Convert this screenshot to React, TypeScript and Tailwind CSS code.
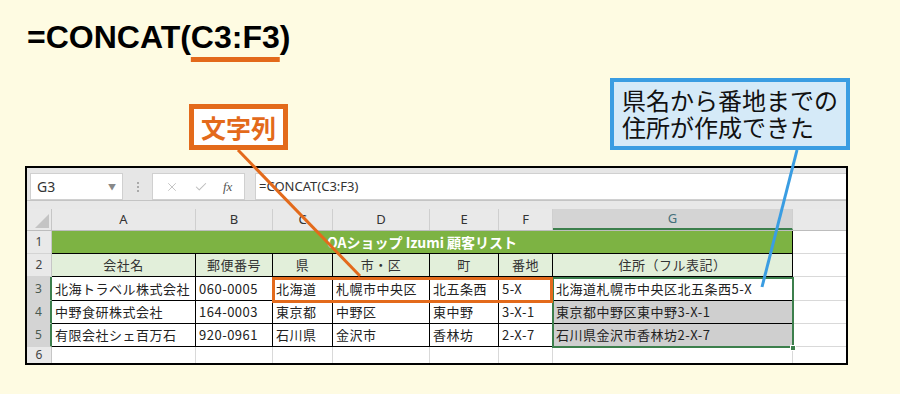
import { X, Check } from 'lucide-react';

type Col = { key: string; w: string };

// 列幅は参照画像から計測
const cols: Col[] = [
  { key: 'A', w: 'w-[144px]' },
  { key: 'B', w: 'w-[77px]' },
  { key: 'C', w: 'w-[60px]' },
  { key: 'D', w: 'w-[97px]' },
  { key: 'E', w: 'w-[69px]' },
  { key: 'F', w: 'w-[54px]' },
  { key: 'G', w: 'w-[240px]' },
];

const headers = ['会社名', '郵便番号', '県', '市・区', '町', '番地', '住所（フル表記）'];

const rows = [
  ['北海トラベル株式会社', '060-0005', '北海道', '札幌市中央区', '北五条西', '5-X', '北海道札幌市中央区北五条西5-X'],
  ['中野食研株式会社', '164-0003', '東京都', '中野区', '東中野', '3-X-1', '東京都中野区東中野3-X-1'],
  ['有限会社シェ百万石', '920-0961', '石川県', '金沢市', '香林坊', '2-X-7', '石川県金沢市香林坊2-X-7'],
];

const jp = "font-['Noto_Sans_CJK_JP',sans-serif]";

function RowHead({ n, selected, h }: { n: number; selected?: boolean; h: string }) {
  return (
    <div
      className={`${h} w-[25px] shrink-0 flex items-center justify-center text-[12px] font-['Noto_Sans',sans-serif] border-b border-[#d4d4d4] ${
        selected
          ? 'bg-[#d4d4d4] text-[#4a5a50] border-r-2 border-r-[#3c7f4c]'
          : 'bg-[#e9e9e9] text-[#444] border-r border-r-[#c6c6c6]'
      }`}
    >
      {n}
    </div>
  );
}

function FormulaBar() {
  return (
    <div className="h-[32px] bg-[#e6e6e6] flex items-start pt-[5px] pl-[3px]">
      <div className="w-[93px] h-[27px] bg-white border border-[#d0d0d0] flex items-center justify-between pl-[6px] pr-[6px]">
        <span className="text-[14px] text-[#333] font-['Noto_Sans',sans-serif]">G3</span>
        <span className="text-[8px] text-[#888]">▼</span>
      </div>
      <div className="w-[29px] h-[27px] flex flex-col items-center justify-center gap-[2px]">
        <span className="w-[2px] h-[2px] bg-[#aaa]" />
        <span className="w-[2px] h-[2px] bg-[#aaa]" />
        <span className="w-[2px] h-[2px] bg-[#aaa]" />
      </div>
      <div className="w-[93px] h-[27px] bg-white border border-[#d0d0d0] flex items-center justify-around px-[4px]">
        <X size={14} strokeWidth={1.5} color="#bdbdbd" />
        <Check size={14} strokeWidth={1.8} color="#bdbdbd" />
        <span className="text-[13px] italic text-[#555] font-['Liberation_Serif',serif]">fx</span>
      </div>
      <div className="flex-1 ml-[10px] h-[27px] bg-white border-y border-l border-[#d0d0d0] flex items-center pl-[3px]">
        <span className="text-[13px] text-[#333] font-['Noto_Sans',sans-serif]">=CONCAT(C3:F3)</span>
      </div>
    </div>
  );
}

function ColumnHeads() {
  return (
    <>
      <div className="h-[10px] bg-[#e8e8e8] border-t border-[#c4c4c4]" />
      <div className="h-[22px] flex bg-[#e9e9e9] border-b border-[#bdbdbd]">
        <div className="w-[25px] shrink-0 border-r border-[#c6c6c6] flex items-end justify-end pr-[2px] pb-[2px]">
          <svg width="14" height="14" viewBox="0 0 14 14">
            <polygon points="14,0 14,14 0,14" fill="#c4c4c4" />
          </svg>
        </div>
        {cols.map((c) => (
          <div
            key={c.key}
            className={`${c.w} shrink-0 flex items-center justify-center text-[13px] font-['Noto_Sans',sans-serif] border-r border-[#cfcfcf] ${
              c.key === 'G' ? 'bg-[#d4d4d4] text-[#44707a] border-b-2 border-b-[#3c7f4c]' : 'text-[#333]'
            }`}
          >
            {c.key}
          </div>
        ))}
        <div className="flex-1" />
      </div>
    </>
  );
}

export default function App() {
  return (
    <div className={`w-[900px] h-[394px] bg-[#fefbe2] relative overflow-hidden ${jp}`}>
      {/* タイトル */}
      <div className="h-[78px] pt-[21px] pl-[27px]">
        <div className="font-['Liberation_Sans',sans-serif] font-bold text-[32px] leading-[32px] text-black">
          =CONCAT(
          <span className="underline decoration-[#e3691b] decoration-[5px] underline-offset-[9px]">C3:F3</span>)
        </div>
      </div>

      {/* 吹き出し */}
      <div className="h-[72px] flex items-end">
        <div className="ml-[189px] w-[99px] h-[46px] border-[5px] border-[#e36a1b] bg-white flex items-center justify-center">
          <span className="text-[25px] leading-none font-bold text-[#e36a1b]">文字列</span>
        </div>
        <div className="ml-auto mr-[50px] w-[240px] h-[72px] border-[4px] border-[#3a9de2] bg-[#d5eaf8] pl-[8px] pt-[4px] text-[24px] leading-[27px] text-[#111]">
          県名から番地までの
          <br />
          住所が作成できた
        </div>
      </div>

      {/* シート */}
      <div className="mt-[16px] ml-[25px] w-[823px] h-[199px] border-2 border-black bg-white relative flex flex-col">
        <FormulaBar />
        <ColumnHeads />

        {/* 1行目 */}
        <div className="h-[23px] flex">
          <RowHead n={1} h="h-[23px]" />
          <div className="w-[741px] shrink-0 bg-[#7db343] border-b border-r border-black flex items-center justify-center">
            <span className="text-[14px] font-bold text-white">OAショップ Izumi 顧客リスト</span>
          </div>
          <div className="flex-1 border-b border-[#d9d9d9]" />
        </div>

        {/* 2行目 見出し */}
        <div className="h-[23px] flex">
          <RowHead n={2} h="h-[23px]" />
          {cols.map((c, i) => (
            <div
              key={c.key}
              className={`${c.w} shrink-0 bg-[#e2efda] border-b border-r border-black flex items-center justify-center text-[13px] text-[#333] tracking-[0.5px]`}
            >
              {headers[i]}
            </div>
          ))}
          <div className="flex-1 border-b border-[#d9d9d9]" />
        </div>

        {/* データ */}
        {rows.map((r, ri) => {
          const h = ri === 0 ? 'h-[24px]' : 'h-[23px]';
          return (
            <div key={ri} className={`${h} flex`}>
              <RowHead n={ri + 3} selected h={h} />
              {cols.map((c, ci) => {
                const isG = c.key === 'G';
                const bg = isG && ri > 0 ? 'bg-[#cfcfcf]' : 'bg-white';
                return (
                  <div
                    key={c.key}
                    className={`${c.w} shrink-0 ${bg} border-b border-r border-black flex items-center pl-[3px] text-[13px] text-[#222] tracking-[0.5px] whitespace-nowrap overflow-hidden`}
                  >
                    {r[ci]}
                  </div>
                );
              })}
              <div className="flex-1 border-b border-[#d9d9d9]" />
            </div>
          );
        })}

        {/* 6行目 */}
        <div className="flex-1 flex">
          <div className="w-[25px] shrink-0 bg-[#e9e9e9] border-r border-[#c6c6c6] flex items-start justify-center text-[12px] text-[#444] font-['Noto_Sans',sans-serif] leading-[16px]">
            6
          </div>
          {cols.map((c) => (
            <div key={c.key} className={`${c.w} shrink-0 border-r border-[#d9d9d9]`} />
          ))}
        </div>

        {/* 選択範囲 G3:G5 */}
        <div className="absolute left-[525px] top-[109px] w-[242px] h-[71px] border-2 border-[#3c7f4c]" />
        <div className="absolute left-[763px] top-[177px] w-[6px] h-[6px] bg-[#3c7f4c] border border-white" />

        {/* C3:F3 の強調枠 */}
        <div className="absolute left-[245px] top-[109px] w-[281px] h-[26px] border-[3px] border-[#e36a1b]" />
      </div>

      {/* 引き出し線 */}
      <svg className="absolute inset-0 pointer-events-none" width="900" height="394">
        <line x1="238" y1="150" x2="360" y2="276" stroke="#e36a1b" strokeWidth="3" />
        <line x1="797" y1="150" x2="762" y2="287" stroke="#3a9de2" strokeWidth="3" />
      </svg>
    </div>
  );
}
